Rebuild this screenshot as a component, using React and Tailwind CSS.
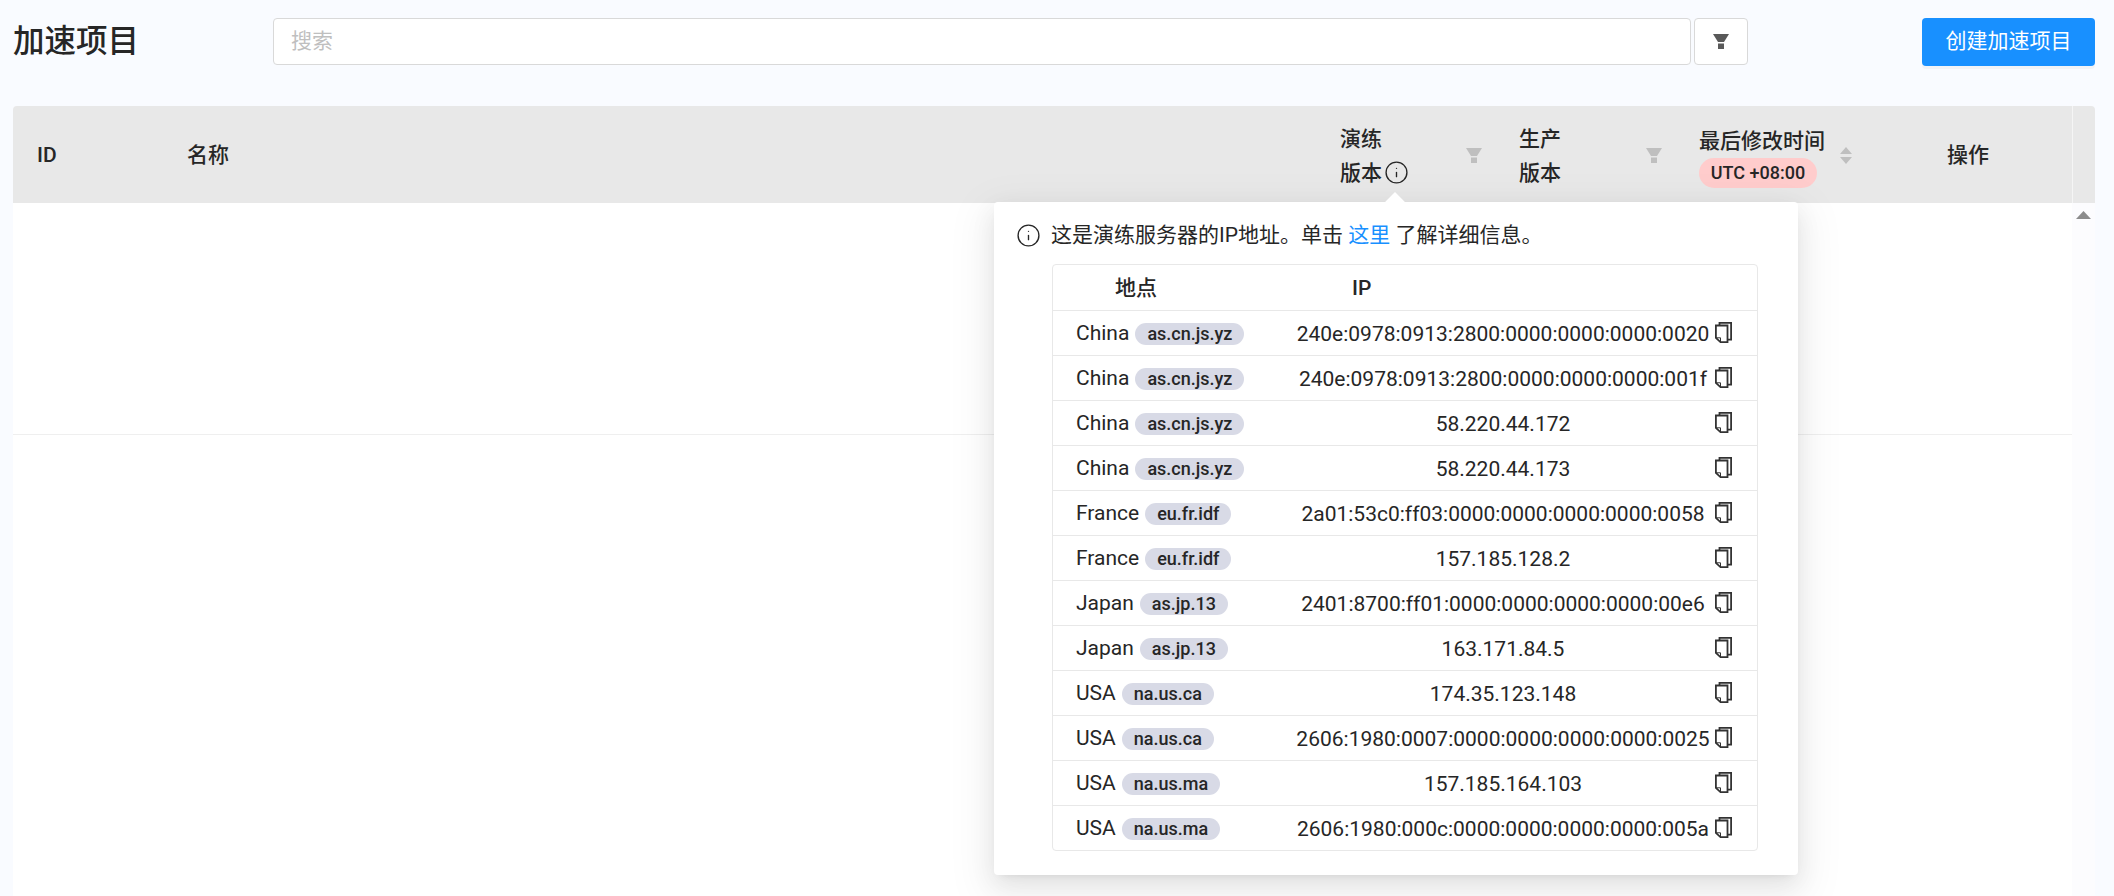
import React from "react";
import { Info } from "lucide-react";

const rows = [
  ["China", "as.cn.js.yz", "240e:0978:0913:2800:0000:0000:0000:0020"],
  ["China", "as.cn.js.yz", "240e:0978:0913:2800:0000:0000:0000:001f"],
  ["China", "as.cn.js.yz", "58.220.44.172"],
  ["China", "as.cn.js.yz", "58.220.44.173"],
  ["France", "eu.fr.idf", "2a01:53c0:ff03:0000:0000:0000:0000:0058"],
  ["France", "eu.fr.idf", "157.185.128.2"],
  ["Japan", "as.jp.13", "2401:8700:ff01:0000:0000:0000:0000:00e6"],
  ["Japan", "as.jp.13", "163.171.84.5"],
  ["USA", "na.us.ca", "174.35.123.148"],
  ["USA", "na.us.ca", "2606:1980:0007:0000:0000:0000:0000:0025"],
  ["USA", "na.us.ma", "157.185.164.103"],
  ["USA", "na.us.ma", "2606:1980:000c:0000:0000:0000:0000:005a"],
];

function Funnel({ className }) {
  return (
    <svg width="16" height="15" viewBox="0 0 16 15" className={className} fill="currentColor">
      <polygon points="0,0 16,0 11,8 5,8" />
      <rect x="5" y="9.5" width="6" height="5.5" />
    </svg>
  );
}

function Sort() {
  return (
    <svg width="12" height="17" viewBox="0 0 12 17" className="text-[#bfbfbf]" fill="currentColor">
      <polygon points="6,0 12,7 0,7" />
      <polygon points="0,10 12,10 6,17" />
    </svg>
  );
}

function Copy() {
  return (
    <svg width="17" height="21" viewBox="0 0 17 21" fill="none" stroke="#333333" strokeWidth="1.8">
      <path d="M4.5 3.5V0.9H16.1V17.6H12.5" />
      <path d="M0.9 3.5H12.5V20.1H5.5L0.9 15.8Z" />
      <path d="M0.9 15.8H5.5V20.1" strokeWidth="1" />
    </svg>
  );
}

export default function App() {
  return (
    <div className="relative h-[896px] overflow-hidden bg-[#f9fbff] pl-[13px] pr-[19px] pt-[18px] font-[Roboto,'Noto_Sans_CJK_SC',sans-serif] text-[21px] text-[#262626]">
      <div className="flex h-[48px] items-start">
        <h1 className="w-[260px] pt-[1px] text-[31.5px] leading-[46px] font-medium">加速项目</h1>
        <div className="flex h-[47px] flex-1 items-center rounded-[4px] border border-[#d9d9d9] bg-white pl-[17px] pt-[1px] text-[#bfbfbf]">搜索</div>
        <div className="ml-[3px] flex h-[47px] w-[54px] items-center justify-center rounded-[4px] border border-[#d9d9d9] bg-white text-[#595959]">
          <Funnel />
        </div>
        <div className="ml-[174px] flex h-[48px] w-[173px] items-center justify-center rounded-[4px] bg-[#1890ff] text-white shadow-[0_3px_0_rgba(0,0,0,0.03)]">创建加速项目</div>
      </div>

      <div className="mt-[40px] flex h-[97px] items-center overflow-hidden rounded-t-[4px] bg-[#e8e8e8] pt-[2px] font-medium">
        <div className="w-[150px] pl-[24px]">ID</div>
        <div className="flex-1 pl-[24px]">名称</div>
        <div className="flex w-[179px] items-center justify-between pl-[24px] pr-[13px]">
          <div className="leading-[34px]">
            <div>演练</div>
            <div className="flex items-center gap-[2px]">版本<Info size={25} strokeWidth={1.3} /></div>
          </div>
          <Funnel className="text-[#bfbfbf]" />
        </div>
        <div className="flex w-[180px] items-center justify-between pl-[24px] pr-[13px]">
          <div className="leading-[34px]">
            <div>生产</div>
            <div>版本</div>
          </div>
          <Funnel className="text-[#bfbfbf]" />
        </div>
        <div className="flex w-[248px] items-center pl-[24px]">
          <div className="flex flex-col items-start">
            <div className="leading-[34px]">最后修改时间</div>
            <span className="flex h-[30px] w-[118px] items-center justify-center rounded-full bg-[#ffcccc] text-[18px]">UTC +08:00</span>
          </div>
          <span className="ml-[15px]"><Sort /></span>
        </div>
        <div className="w-[149px] pl-[24px]">操作</div>
        <div className="-mt-[2px] h-[97px] w-[23px] border-l border-[#f5f5f5]"></div>
      </div>

      <div className="flex h-[693px]">
        <div className="flex-1 bg-white">
          <div className="h-[232px] border-b border-[#efefef]"></div>
        </div>
        <div className="flex w-[23px] justify-center bg-[#fcfcfe] pt-[8px]">
          <svg width="15" height="8" viewBox="0 0 15 8" fill="#8c8c8c"><polygon points="7.5,0 15,8 0,8" /></svg>
        </div>
      </div>

      <div className="absolute left-[994px] top-[202px] h-[673px] w-[804px] rounded-[4px] bg-white shadow-[0_4px_9px_-6px_rgba(0,0,0,0.12),0_9px_24px_0_rgba(0,0,0,0.08),0_13px_42px_12px_rgba(0,0,0,0.05)]">
        <div className="absolute left-[394px] top-[-7px] h-[14px] w-[14px] rotate-45 bg-white"></div>
        <div className="relative mt-[15px] flex h-[36px] items-center pl-[22px]">
          <Info size={25} strokeWidth={1.3} />
          <span className="ml-[10px] pt-[1px]">这是演练服务器的IP地址。单击 <span className="text-[#1890ff]">这里</span> 了解详细信息。</span>
        </div>
        <div className="absolute left-[58px] top-[62px] w-[706px] rounded-[4px] border border-[#e8e8e8]">
          <div className="flex h-[45px] items-center pt-[2px] font-medium">
            <div className="w-[239px] pl-[62px]">地点</div>
            <div className="pl-[60px]">IP</div>
          </div>
          {rows.map(([loc, tag, ip], i) => (
            <div key={i} className="flex h-[45px] items-center border-t border-[#e8e8e8]">
              <div className="flex w-[239px] items-center pl-[23px] pt-[1px]">
                <span className="pt-[1px]">{loc}</span>
                <span className="ml-[6px] flex h-[22px] items-center rounded-full bg-[#d8dae6] px-[12px] text-[18px] font-medium">{tag}</span>
              </div>
              <div className="w-[422px] whitespace-nowrap pt-[3px] text-center">{ip}</div>
              <span className="ml-[1px] mb-[1px]"><Copy /></span>
            </div>
          ))}
        </div>
      </div>
    </div>
  );
}
